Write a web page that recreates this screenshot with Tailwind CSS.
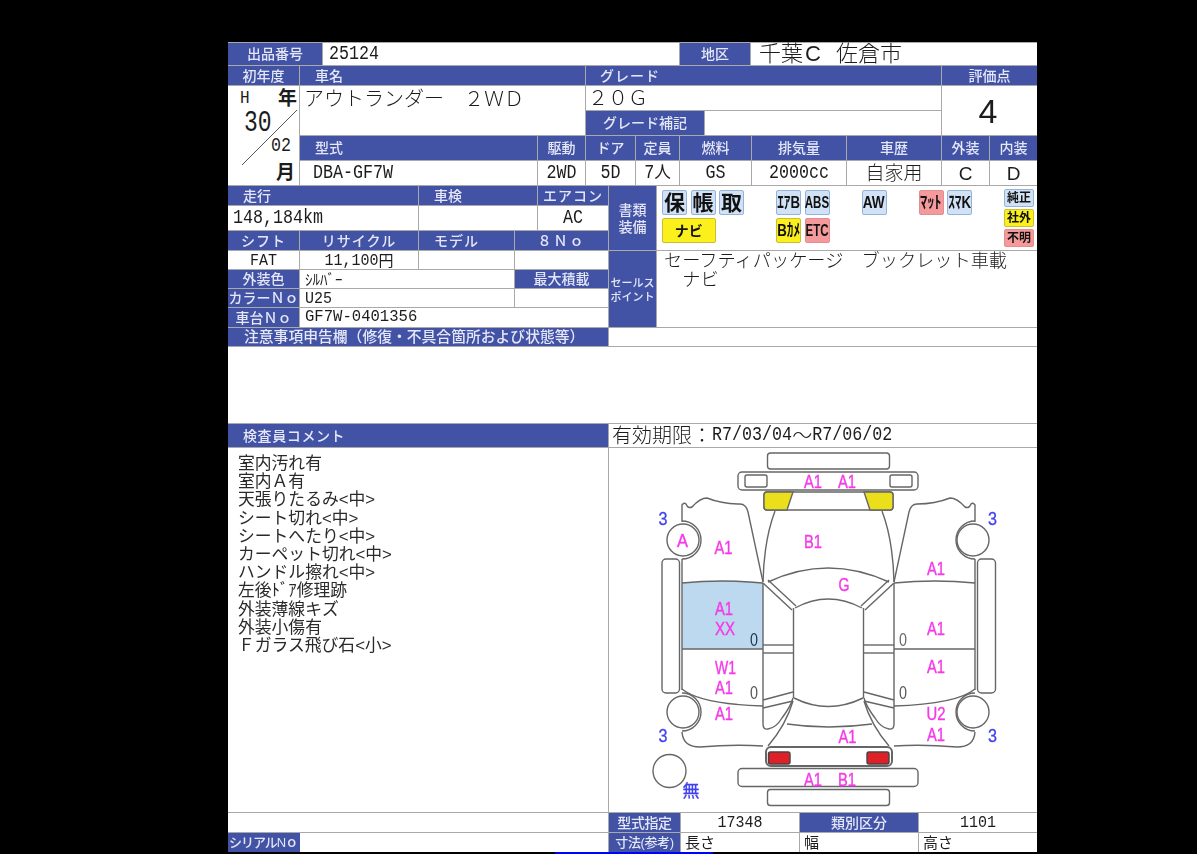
<!DOCTYPE html>
<html lang="ja">
<head>
    <meta charset="UTF-8">
    <title>出品票</title>
    <script src="https://cdn.jsdelivr.net/npm/@tailwindcss/browser@4"></script>
</head>
<body class="bg-black h-[854px] overflow-hidden font-['Liberation_Sans','Noto_Sans_CJK_JP',sans-serif] text-[#1c1c1c]">
<div class="ml-[228px] mt-[42px] w-[809px] bg-[#a9a9a9] pt-px flex flex-col gap-px blur-[0.4px]">

    <!-- row 1 -->
    <div class="flex gap-px h-[22px]">
        <div class="w-[94px] bg-[#4252a5] text-[#e4e7f7] font-medium text-[14px] leading-none flex items-center justify-center">出品番号</div>
        <div class="w-[356px] bg-white flex items-center pl-[6px]"><span class="font-['Liberation_Mono'] text-[16.7px] leading-none inline-block scale-y-[1.2]">25124</span></div>
        <div class="w-[70px] bg-[#4252a5] text-[#e4e7f7] font-medium text-[14px] leading-none flex items-center justify-center">地区</div>
        <div class="w-[286px] bg-white flex items-center pl-[8px] text-[22px] leading-none font-light whitespace-nowrap">千葉<span class="ml-[2px] mr-[15px]">C</span>佐倉市</div>
    </div>

    <!-- row 2 -->
    <div class="flex gap-px h-[19px] text-[14px] leading-none text-[#e4e7f7] font-medium">
        <div class="w-[71px] bg-[#4252a5] flex items-center justify-center">初年度</div>
        <div class="w-[285px] bg-[#4252a5] flex items-center pl-[15px]">車名</div>
        <div class="w-[355px] bg-[#4252a5] flex items-center pl-[14px] tracking-[1px]">グレード</div>
        <div class="w-[95px] bg-[#4252a5] flex items-center justify-center">評価点</div>
    </div>

    <!-- year + car name block -->
    <div class="flex gap-px h-[99px]">
        <div class="relative w-[71px] bg-white flex flex-col leading-none">
            <div class="flex justify-between items-center h-[24px] pl-[12px] pr-[2px]">
                <span class="font-['Liberation_Mono'] text-[16px] inline-block scale-y-[1.2]">H</span>
                <span class="text-[19px] font-bold">年</span>
            </div>
            <div class="pl-[16px] h-[24px] flex items-center pt-[5px]"><span class="font-['Liberation_Mono'] text-[23px] inline-block scale-y-[1.25]">30</span></div>
            <div class="h-[25px] flex items-center justify-end pr-[8px]"><span class="font-['Liberation_Mono'] text-[16.7px] inline-block scale-y-[1.2]">02</span></div>
            <div class="h-[26px] flex items-center justify-end pr-[4px]"><span class="text-[19px] font-bold">月</span></div>
            <svg class="absolute left-0 top-0" width="71" height="99" viewBox="0 0 71 99">
                <line x1="69" y1="24" x2="14" y2="79" stroke="#555" stroke-width="1"/>
            </svg>
        </div>
        <div class="w-[737px] flex flex-col gap-px">
            <div class="flex gap-px h-[49px]">
                <div class="w-[285px] bg-white pl-[4px] pt-[3px] text-[20px] leading-[20px] font-light whitespace-pre">アウトランダー　２ＷＤ</div>
                <div class="w-[355px] flex flex-col gap-px">
                    <div class="h-[24px] bg-white pl-[2px] flex items-center text-[20px] leading-none font-light">２０Ｇ</div>
                    <div class="h-[24px] flex gap-px">
                        <div class="w-[118px] bg-[#4252a5] text-[#e4e7f7] font-medium text-[14px] leading-none flex items-center justify-center">グレード補記</div>
                        <div class="flex-1 bg-white"></div>
                    </div>
                </div>
                <div class="w-[95px] bg-white flex items-center justify-center text-[34px] leading-none pr-[3px]">4</div>
            </div>
            <div class="flex gap-px h-[24px] text-[14px] leading-none text-[#e4e7f7] font-medium">
                <div class="w-[237px] bg-[#4252a5] flex items-center pl-[15px]">型式</div>
                <div class="w-[47px] bg-[#4252a5] flex items-center justify-center">駆動</div>
                <div class="w-[49px] bg-[#4252a5] flex items-center justify-center">ドア</div>
                <div class="w-[43px] bg-[#4252a5] flex items-center justify-center">定員</div>
                <div class="w-[71px] bg-[#4252a5] flex items-center justify-center">燃料</div>
                <div class="w-[94px] bg-[#4252a5] flex items-center justify-center">排気量</div>
                <div class="w-[94px] bg-[#4252a5] flex items-center justify-center">車歴</div>
                <div class="w-[47px] bg-[#4252a5] flex items-center justify-center">外装</div>
                <div class="w-[47px] bg-[#4252a5] flex items-center justify-center">内装</div>
            </div>
            <div class="flex gap-px h-[24px] leading-none">
                <div class="w-[237px] bg-white flex items-center pl-[13px]"><span class="font-['Liberation_Mono'] text-[16.7px] inline-block scale-y-[1.2]">DBA-GF7W</span></div>
                <div class="w-[47px] bg-white flex items-center justify-center"><span class="font-['Liberation_Mono'] text-[16.7px] inline-block scale-y-[1.2]">2WD</span></div>
                <div class="w-[49px] bg-white flex items-center justify-center"><span class="font-['Liberation_Mono'] text-[16.7px] inline-block scale-y-[1.2]">5D</span></div>
                <div class="w-[43px] bg-white flex items-center justify-center text-[16.7px]"><span class="font-['Liberation_Mono'] inline-block scale-y-[1.2]">7</span>人</div>
                <div class="w-[71px] bg-white flex items-center justify-center"><span class="font-['Liberation_Mono'] text-[16.7px] inline-block scale-y-[1.2]">GS</span></div>
                <div class="w-[94px] bg-white flex items-center justify-center"><span class="font-['Liberation_Mono'] text-[16.7px] inline-block scale-y-[1.2]">2000cc</span></div>
                <div class="w-[94px] bg-white flex items-center justify-center text-[19px] font-light">自家用</div>
                <div class="w-[47px] bg-white flex items-center justify-center text-[19px]">C</div>
                <div class="w-[47px] bg-white flex items-center justify-center text-[19px]">D</div>
            </div>
        </div>
    </div>

    <!-- mileage / shift block + equipment -->
    <div class="flex gap-px h-[141px]">
        <div class="w-[380px] flex flex-col gap-px leading-none">
            <div class="flex gap-px h-[19px] text-[14px] text-[#e4e7f7] font-medium">
                <div class="w-[190px] bg-[#4252a5] flex items-center pl-[15px]">走行</div>
                <div class="w-[118px] bg-[#4252a5] flex items-center pl-[15px]">車検</div>
                <div class="w-[70px] bg-[#4252a5] flex items-center justify-center tracking-[1px]">エアコン</div>
            </div>
            <div class="flex gap-px h-[24px]">
                <div class="w-[190px] bg-white flex items-center pl-[5px]"><span class="font-['Liberation_Mono'] text-[16.7px] inline-block scale-y-[1.2]">148,184km</span></div>
                <div class="w-[118px] bg-white"></div>
                <div class="w-[70px] bg-white flex items-center justify-center"><span class="font-['Liberation_Mono'] text-[16.7px] inline-block scale-y-[1.2]">AC</span></div>
            </div>
            <div class="flex gap-px h-[19px] text-[14px] text-[#e4e7f7] font-medium">
                <div class="w-[71px] bg-[#4252a5] flex items-center justify-center tracking-[1px]">シフト</div>
                <div class="w-[118px] bg-[#4252a5] flex items-center justify-center tracking-[1px]">リサイクル</div>
                <div class="w-[95px] bg-[#4252a5] flex items-center pl-[15px] tracking-[1px]">モデル</div>
                <div class="w-[93px] bg-[#4252a5] flex items-center justify-center tracking-[2px]">８Ｎｏ</div>
            </div>
            <div class="flex gap-px h-[18px]">
                <div class="w-[71px] bg-white flex items-center justify-center"><span class="font-['Liberation_Mono'] text-[15px] inline-block scale-y-[1.15]">FAT</span></div>
                <div class="w-[118px] bg-white flex items-center justify-center text-[15px]"><span class="font-['Liberation_Mono'] inline-block scale-y-[1.15]">11,100</span>円</div>
                <div class="w-[95px] bg-white"></div>
                <div class="w-[93px] bg-white"></div>
            </div>
            <div class="flex gap-px h-[18px]">
                <div class="w-[71px] bg-[#4252a5] text-[#e4e7f7] font-medium text-[14px] flex items-center justify-center">外装色</div>
                <div class="w-[214px] bg-white flex items-center pl-[5px] text-[15px]">ｼﾙﾊﾞｰ</div>
                <div class="w-[93px] bg-[#4252a5] text-[#e4e7f7] font-medium text-[14px] flex items-center justify-center">最大積載</div>
            </div>
            <div class="flex gap-px h-[18px]">
                <div class="w-[71px] bg-[#4252a5] text-[#e4e7f7] font-medium text-[14px] flex items-center justify-center">カラーＮｏ</div>
                <div class="w-[214px] bg-white flex items-center pl-[5px]"><span class="font-['Liberation_Mono'] text-[15px] inline-block scale-y-[1.15]">U25</span></div>
                <div class="w-[93px] bg-white"></div>
            </div>
            <div class="flex gap-px h-[19px]">
                <div class="w-[71px] bg-[#4252a5] text-[#e4e7f7] font-medium text-[14px] flex items-center justify-center">車台Ｎｏ</div>
                <div class="flex-1 bg-white flex items-center pl-[5px]"><span class="font-['Liberation_Mono'] text-[15.6px] inline-block scale-y-[1.1]">GF7W-0401356</span></div>
            </div>
        </div>

        <div class="w-[47px] flex flex-col gap-px leading-none text-[#e4e7f7] font-medium">
            <div class="h-[64px] bg-[#4252a5] flex flex-col items-center justify-center gap-[3px] text-[14px]">
                <span>書類</span>
                <span>装備</span>
            </div>
            <div class="h-[76px] bg-[#4252a5] flex flex-col items-center justify-center gap-[3px] text-[11px] pt-[3px]">
                <span>セールス</span>
                <span>ポイント</span>
            </div>
        </div>

        <div class="w-[380px] flex flex-col gap-px">
            <div class="h-[64px] bg-white flex justify-between pl-[5px] pr-[3px] pt-[4px] leading-none">
                <div class="grid grid-cols-[repeat(11,25px)] grid-rows-[25px_25px] gap-x-[3.5px] gap-y-[3px] font-bold text-[#111] whitespace-nowrap">
                    <div class="bg-[#d2e2f6] border border-[#93b3da] rounded-[2px] flex items-center justify-center text-[21px]">保</div>
                    <div class="bg-[#d2e2f6] border border-[#93b3da] rounded-[2px] flex items-center justify-center text-[21px]">帳</div>
                    <div class="bg-[#d2e2f6] border border-[#93b3da] rounded-[2px] flex items-center justify-center text-[21px]">取</div>
                    <div></div>
                    <div class="bg-[#d2e2f6] border border-[#93b3da] rounded-[2px] flex items-center justify-center text-[17px]"><span class="inline-block scale-x-[0.78]">ｴｱB</span></div>
                    <div class="bg-[#d2e2f6] border border-[#93b3da] rounded-[2px] flex items-center justify-center text-[17px]"><span class="inline-block scale-x-[0.68]">ABS</span></div>
                    <div></div>
                    <div class="bg-[#d2e2f6] border border-[#93b3da] rounded-[2px] flex items-center justify-center text-[17px]"><span class="inline-block scale-x-[0.8]">AW</span></div>
                    <div></div>
                    <div class="bg-[#f59a9c] border border-[#e58d8d] rounded-[2px] flex items-center justify-center text-[17px]"><span class="inline-block scale-x-[0.85]">ﾏｯﾄ</span></div>
                    <div class="bg-[#d2e2f6] border border-[#93b3da] rounded-[2px] flex items-center justify-center text-[17px]"><span class="inline-block scale-x-[0.78]">ｽﾏK</span></div>
                    <div class="col-span-2 bg-[#fbf01c] border border-[#c9bd3a] rounded-[2px] flex items-center justify-center text-[14px]">ナビ</div>
                    <div></div>
                    <div></div>
                    <div class="bg-[#fbf01c] border border-[#c9bd3a] rounded-[2px] flex items-center justify-center text-[17px]"><span class="inline-block scale-x-[0.78]">Bｶﾒ</span></div>
                    <div class="bg-[#f59a9c] border border-[#e58d8d] rounded-[2px] flex items-center justify-center text-[17px]"><span class="inline-block scale-x-[0.68]">ETC</span></div>
                </div>
                <div class="flex flex-col gap-[2px] -mt-[1px] w-[30px] text-[12px] font-bold text-[#111]">
                    <div class="h-[18px] bg-[#d2e2f6] border border-[#93b3da] rounded-[2px] flex items-center justify-center">純正</div>
                    <div class="h-[18px] bg-[#fbf01c] border border-[#c9bd3a] rounded-[2px] flex items-center justify-center">社外</div>
                    <div class="h-[18px] bg-[#f59a9c] border border-[#e58d8d] rounded-[2px] flex items-center justify-center">不明</div>
                </div>
            </div>
            <div class="h-[76px] bg-white pl-[7px] pt-[1px] text-[18.2px] leading-[19px] font-light whitespace-pre">セーフティパッケージ　ブックレット車載
　ナビ</div>
        </div>
    </div>

    <!-- notes -->
    <div class="flex gap-px h-[18px]">
        <div class="w-[380px] bg-[#4252a5] text-[#e4e7f7] font-medium text-[14.8px] leading-none flex items-center pl-[16px] whitespace-nowrap">注意事項申告欄（修復・不具合箇所および状態等）</div>
        <div class="w-[428px] bg-white"></div>
    </div>
    <div class="h-[76px] bg-white"></div>

    <!-- comment header -->
    <div class="flex gap-px h-[23px] leading-none">
        <div class="w-[380px] bg-[#4252a5] text-[#e4e7f7] font-medium text-[14px] tracking-[0.6px] flex items-center pl-[15px]">検査員コメント</div>
        <div class="w-[428px] bg-white flex items-center pl-[3px] text-[20px] font-light whitespace-nowrap">有効期限：<span class="font-['Liberation_Mono'] text-[16.7px] font-normal inline-block scale-y-[1.2]">R7/03/04</span>～<span class="font-['Liberation_Mono'] text-[16.7px] font-normal inline-block scale-y-[1.2]">R7/06/02</span></div>
    </div>

    <!-- comment + car diagram -->
    <div class="flex gap-px h-[364px]">
        <div class="w-[380px] bg-white pl-[10px] pt-[7px] text-[16.8px] leading-[18.2px] text-[#2a2a2a]">
            <div>室内汚れ有</div>
            <div>室内Ａ有</div>
            <div>天張りたるみ&lt;中&gt;</div>
            <div>シート切れ&lt;中&gt;</div>
            <div>シートへたり&lt;中&gt;</div>
            <div>カーペット切れ&lt;中&gt;</div>
            <div>ハンドル擦れ&lt;中&gt;</div>
            <div>左後ﾄﾞｱ修理跡</div>
            <div>外装薄線キズ</div>
            <div>外装小傷有</div>
            <div>Ｆガラス飛び石&lt;小&gt;</div>
        </div>
        <div class="w-[428px] bg-white">
            <svg width="428" height="364" viewBox="609 448 428 364" fill="none" stroke="#666" stroke-width="1.4">
                <!-- blue door panel -->
                <path d="M682 583 Q722 579 763 583 V649 H682 Z" fill="#bcd9ef" stroke="none"/>

                <!-- front end -->
                <rect x="767.5" y="453" width="122" height="16" rx="3"/>
                <rect x="738" y="472" width="180" height="18" rx="4"/>
                <rect x="745" y="475" width="22" height="12" rx="2"/>
                <rect x="890" y="475" width="22" height="12" rx="2"/>
                <rect x="764" y="492" width="129" height="18" rx="3"/>
                <path d="M764 495 Q764 492 767 492 H793 L787 510 H767 Q764 510 764 507 Z" fill="#ebdf1c"/>
                <path d="M893 495 Q893 492 890 492 H864 L870 510 H890 Q893 510 893 507 Z" fill="#ebdf1c"/>

                <!-- hood and fenders -->
                <path d="M775 511 Q764 540 763 582"/>
                <path d="M882 511 Q893 540 894 582"/>
                <path d="M682 522 V505 Q684 502 686 504 Q688 509 692 507 Q700 498 707 498 Q722 504 740 504 Q746 504 748 512 L763 582"/>
                <path d="M975 522 V505 Q973 502 971 504 Q969 509 965 507 Q957 498 950 498 Q935 504 917 504 Q911 504 909 512 L894 582"/>

                <!-- wheels -->
                <circle cx="683" cy="540" r="16"/>
                <path d="M682 521 A19 19 0 0 1 682 559"/>
                <circle cx="973" cy="540" r="16"/>
                <path d="M975 521 A19 19 0 0 0 975 559"/>
                <circle cx="683" cy="712" r="16"/>
                <path d="M682 693 A19 19 0 0 1 682 731"/>
                <circle cx="973" cy="712" r="16"/>
                <path d="M975 693 A19 19 0 0 0 975 731"/>
                <circle cx="669.5" cy="771" r="16.5"/>

                <!-- side sills -->
                <rect x="662" y="559" width="17.5" height="134" rx="4"/>
                <rect x="977.5" y="559" width="18" height="134" rx="4"/>
                <path d="M682 559 V690"/>
                <path d="M975 559 V690"/>

                <!-- doors -->
                <path d="M682 583 Q722 579 763 583"/>
                <path d="M894 583 Q935 579 975 583"/>
                <path d="M682 649 H763"/>
                <path d="M894 649 H975"/>
                <path d="M763 583 V724 Q763 730 768 729 Q776 728 782 718 Q791 706 793 698"/>
                <path d="M894 583 V724 Q894 730 889 729 Q881 728 875 718 Q866 706 864 698"/>
                <path d="M793.5 608 V698"/>
                <path d="M863.5 608 V698"/>
                <path d="M763 645 H793"/>
                <path d="M763 653 H793"/>
                <path d="M864 645 H894"/>
                <path d="M864 653 H894"/>

                <!-- windscreen and roof -->
                <path d="M768 582 Q828 554 889 582"/>
                <path d="M795 608 Q828 590 862 608"/>
                <path d="M763 583 L792 610"/>
                <path d="M768 580 L796 606"/>
                <path d="M894 583 L865 610"/>
                <path d="M889 580 L861 606"/>

                <!-- rear quarter -->
                <path d="M763 700 L793 692"/>
                <path d="M763 708 L793 701"/>
                <path d="M864 692 L894 700"/>
                <path d="M864 701 L894 708"/>
                <path d="M794 698 Q828 715 863 698"/>
                <path d="M787 724 Q828 730 872 724"/>
                <path d="M793 701 Q786 725 768 746"/>
                <path d="M864 701 Q871 725 889 746"/>
                <path d="M682 689 Q700 704 763 706"/>
                <path d="M975 689 Q957 704 894 706"/>
                <path d="M682 732 Q683 747 700 747 Q735 744 763 746"/>
                <path d="M975 732 Q974 747 957 747 Q922 744 894 746"/>

                <!-- rear end -->
                <rect x="766" y="747" width="126" height="19" rx="5" stroke-width="2"/>
                <rect x="768.5" y="752" width="21.5" height="12" rx="2" fill="#e01f26" stroke="#444"/>
                <rect x="867" y="752" width="22" height="12" rx="2" fill="#e01f26" stroke="#444"/>
                <rect x="738" y="768.5" width="180" height="18" rx="4"/>
                <rect x="767.5" y="789.5" width="122" height="16" rx="3"/>

                <!-- damage codes -->
                <g fill="#f53ae8" stroke="#f53ae8" stroke-width="0.4" font-family="Liberation Sans" font-size="18" text-anchor="middle">
                    <text x="813" y="488" textLength="18" lengthAdjust="spacingAndGlyphs">A1</text>
                    <text x="847" y="488" textLength="18" lengthAdjust="spacingAndGlyphs">A1</text>
                    <text x="682.5" y="547" textLength="11" lengthAdjust="spacingAndGlyphs">A</text>
                    <text x="723.5" y="554" textLength="18" lengthAdjust="spacingAndGlyphs">A1</text>
                    <text x="813" y="548" textLength="18" lengthAdjust="spacingAndGlyphs">B1</text>
                    <text x="936" y="575" textLength="18" lengthAdjust="spacingAndGlyphs">A1</text>
                    <text x="844" y="591" textLength="11" lengthAdjust="spacingAndGlyphs">G</text>
                    <text x="724" y="615" textLength="18" lengthAdjust="spacingAndGlyphs">A1</text>
                    <text x="725" y="635" textLength="20" lengthAdjust="spacingAndGlyphs">XX</text>
                    <text x="936" y="635" textLength="18" lengthAdjust="spacingAndGlyphs">A1</text>
                    <text x="725.5" y="674" textLength="21" lengthAdjust="spacingAndGlyphs">W1</text>
                    <text x="724" y="694" textLength="18" lengthAdjust="spacingAndGlyphs">A1</text>
                    <text x="936" y="673" textLength="18" lengthAdjust="spacingAndGlyphs">A1</text>
                    <text x="724" y="720" textLength="18" lengthAdjust="spacingAndGlyphs">A1</text>
                    <text x="936" y="720" textLength="19" lengthAdjust="spacingAndGlyphs">U2</text>
                    <text x="936" y="741" textLength="18" lengthAdjust="spacingAndGlyphs">A1</text>
                    <text x="847.5" y="743" textLength="18" lengthAdjust="spacingAndGlyphs">A1</text>
                    <text x="813" y="786" textLength="18" lengthAdjust="spacingAndGlyphs">A1</text>
                    <text x="847" y="786" textLength="18" lengthAdjust="spacingAndGlyphs">B1</text>
                </g>
                <g fill="#4040f0" stroke="#4040f0" stroke-width="0.3" font-family="Liberation Sans" font-size="18" text-anchor="middle">
                    <text x="663" y="525" textLength="9" lengthAdjust="spacingAndGlyphs">3</text>
                    <text x="992.5" y="525" textLength="9" lengthAdjust="spacingAndGlyphs">3</text>
                    <text x="663" y="742" textLength="9" lengthAdjust="spacingAndGlyphs">3</text>
                    <text x="992.5" y="742" textLength="9" lengthAdjust="spacingAndGlyphs">3</text>
                    <text x="691" y="797" font-family="Noto Sans CJK JP" font-size="17">無</text>
                </g>
                <g stroke="none" font-family="Liberation Sans" font-size="19" text-anchor="middle">
                    <text x="754" y="646" textLength="8" lengthAdjust="spacingAndGlyphs" fill="#1d3344">0</text>
                    <text x="903" y="646" textLength="8" lengthAdjust="spacingAndGlyphs" fill="#666">0</text>
                    <text x="754" y="699" textLength="8" lengthAdjust="spacingAndGlyphs" fill="#555">0</text>
                    <text x="903" y="699" textLength="8" lengthAdjust="spacingAndGlyphs" fill="#555">0</text>
                </g>
            </svg>
        </div>
    </div>

    <!-- bottom rows -->
    <div class="flex gap-px h-[19px] leading-none">
        <div class="w-[380px] bg-white"></div>
        <div class="w-[71px] bg-[#4252a5] text-[#e4e7f7] font-medium text-[14px] tracking-[-0.4px] flex items-center justify-center whitespace-nowrap">型式指定</div>
        <div class="w-[118px] bg-white flex items-center justify-center"><span class="font-['Liberation_Mono'] text-[15px] inline-block scale-y-[1.15]">17348</span></div>
        <div class="w-[118px] bg-[#4252a5] text-[#e4e7f7] font-medium text-[14px] flex items-center justify-center">類別区分</div>
        <div class="w-[118px] bg-white flex items-center justify-center"><span class="font-['Liberation_Mono'] text-[15px] inline-block scale-y-[1.15]">1101</span></div>
    </div>
    <div class="flex gap-px h-[19px] leading-none">
        <div class="w-[380px] flex">
            <div class="w-[72px] bg-[#4252a5] text-[#e4e7f7] font-medium text-[13px] tracking-[-1px] flex items-center pl-[1px] whitespace-nowrap">シリアルNｏ</div>
            <div class="flex-1 bg-white"></div>
        </div>
        <div class="w-[71px] bg-[#4252a5] text-[#e4e7f7] font-medium text-[13px] tracking-[-0.4px] flex items-center justify-center whitespace-nowrap">寸法(参考)</div>
        <div class="w-[118px] bg-white flex items-center pl-[4px] text-[15px]">長さ</div>
        <div class="w-[118px] bg-white flex items-center pl-[4px] text-[15px]">幅</div>
        <div class="w-[118px] bg-white flex items-center pl-[4px] text-[15px]">高さ</div>
    </div>
</div>
<div class="ml-[555px] w-[158px] h-[2px] bg-[#0000ff]"></div>
</body>
</html>
